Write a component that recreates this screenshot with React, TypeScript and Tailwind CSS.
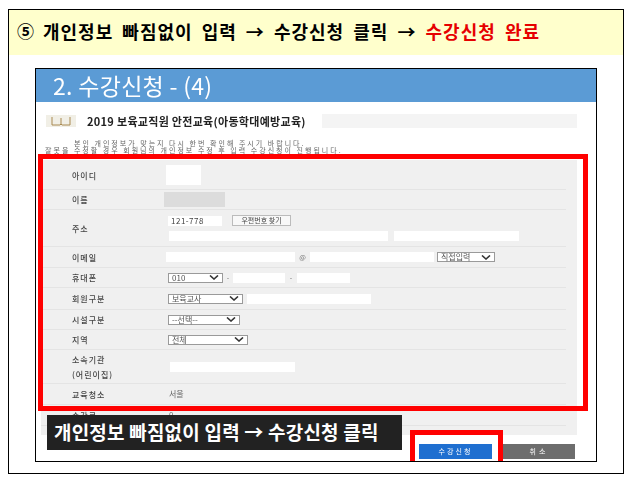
import React from 'react';

const KR = "font-['Noto_Sans_CJK_KR',sans-serif]";

function Chevron({ className }: { className?: string }) {
  return (
    <svg width="10" height="5" viewBox="0 0 10 5" className={className}>
      <path d="M1 0.5 L5 4 L9 0.5" fill="none" stroke="#333" strokeWidth="1.6" />
    </svg>
  );
}

function Select({ label, width }: { label: string; width: string }) {
  return (
    <div className={`${width} h-[10px] border border-[#9a9a9a] bg-white flex items-center justify-between pl-[3px] pr-[3px] text-[8px] leading-none text-[#555]`}>
      <span>{label}</span>
      <Chevron />
    </div>
  );
}

function Field({ width, gray }: { width: string; gray?: boolean }) {
  return <div className={`${width} h-[10px] ${gray ? 'bg-[#dcdcdc]' : 'bg-white'}`} />;
}

function Row({ label, height, children }: { label: React.ReactNode; height: string; children?: React.ReactNode }) {
  return (
    <div className={`${height} flex items-center border-b border-[#e4e4e4] mr-[11px]`}>
      <div className="w-[127px] pl-[31px] text-[8px] font-medium leading-[15px] tracking-[1px] text-[#444]">{label}</div>
      <div className="flex-1 min-w-0">{children}</div>
    </div>
  );
}

export default function App() {
  return (
    <div className={`${KR} w-[634px] h-[485px] bg-white pt-[9px] pl-[8px]`}>
      <div className="w-[616px] h-[465px] border border-black">
        <div className="h-[45px] bg-[#ffffcc] flex items-center pl-[8px] gap-[9px] pb-[4px]">
          <span className="text-[17px] font-bold leading-none text-black">⑤</span>
          <span className="text-[18px] font-bold leading-none tracking-[1px] [word-spacing:4px] whitespace-pre text-black">
            개인정보 빠짐없이 입력 → 수강신청 클릭 → <span className="text-[#e60000]">수강신청 완료</span>
          </span>
        </div>

        <div className="relative ml-[26px] mt-[13px] w-[562px] h-[394px] border border-black overflow-hidden">
          <div className="blur-[0.5px]">
            <div className="h-[33px] bg-[#5b9bd5] flex items-center pl-[17px] text-[23px] font-normal tracking-[0.3px] text-white">
              2. 수강신청 - (4)
            </div>

            <div className="flex items-center mt-[11px] pl-[10px] h-[16px]">
              <svg width="30" height="12" viewBox="0 0 30 12" className="mr-[11px]">
                <rect width="30" height="12" fill="#f1efe6" />
                <path d="M6 2 V10 H14 L15 9 L16 10 H24 V2 M15 3 V9" fill="none" stroke="#a98a52" strokeWidth="1" />
              </svg>
              <span className="text-[11px] font-bold tracking-[0.3px] text-[#222] whitespace-nowrap">2019 보육교직원 안전교육(아동학대예방교육)</span>
              <div className="ml-[16px] w-[255px] h-[14px] bg-[#f4f4f4]" />
            </div>

            <div className="mt-[11px] text-[7px] leading-[7px] tracking-[2px] text-[#666] whitespace-nowrap">
              <div className="pl-[38px]">본인 개인정보가 맞는지 다시 한번 확인해 주시기 바랍니다.</div>
              <div className="pl-[9px]">잘못을 수정할 경우 회원님의 개인정보 수정 후 입력 수강신청이 진행됩니다.</div>
            </div>

            <div className="ml-[5px] mt-[6px] w-[536px] bg-[#f0f0f0] pt-[1px] pb-[9px]">
              <Row label="아이디" height="h-[29px]">
                <div className="w-[35px] h-[20px] bg-white -ml-[2px]" />
              </Row>
              <Row label="이름" height="h-[20px]">
                <div className="w-[61px] h-[15px] bg-[#dcdcdc] -ml-[4px]" />
              </Row>
              <Row label="주소" height="h-[37px]">
                <div className="flex flex-col gap-[5px]">
                  <div className="flex items-center gap-[10px]">
                    <div className="w-[54px] h-[10px] bg-white text-[8px] leading-[10px] pl-[3px] tracking-[0.5px] text-[#444]">121-778</div>
                    <div className="h-[11px] w-[59px] border border-[#bbb] bg-[#f8f8f8] text-[7px] leading-[9px] text-center text-[#444] whitespace-nowrap">우편번호 찾기</div>
                  </div>
                  <div className="flex gap-[6px] ml-[1px]">
                    <Field width="w-[219px]" />
                    <Field width="w-[125px]" />
                  </div>
                </div>
              </Row>
              <Row label="이메일" height="h-[21px]">
                <div className="flex items-center -ml-[2px]">
                  <Field width="w-[129px]" />
                  <span className="w-[15px] text-center text-[7px] leading-none text-[#777]">@</span>
                  <Field width="w-[124px]" />
                  <div className="w-[3px]" />
                  <Select label="직접입력" width="w-[58px]" />
                </div>
              </Row>
              <Row label="휴대폰" height="h-[20px]">
                <div className="flex items-center">
                  <Select label="010" width="w-[55px]" />
                  <span className="w-[10px] text-center text-[7px] leading-none text-[#777]">-</span>
                  <Field width="w-[52px]" />
                  <span className="w-[12px] text-center text-[7px] leading-none text-[#777]">-</span>
                  <Field width="w-[53px]" />
                </div>
              </Row>
              <Row label="회원구분" height="h-[22px]">
                <div className="flex items-center gap-[4px]">
                  <Select label="보육교사" width="w-[75px]" />
                  <Field width="w-[124px]" />
                </div>
              </Row>
              <Row label="시설구분" height="h-[20px]">
                <Select label="--선택--" width="w-[72px]" />
              </Row>
              <Row label="지역" height="h-[20px]">
                <Select label="전체" width="w-[80px]" />
              </Row>
              <Row label={<>소속기관<br />(어린이집)</>} height="h-[34px]">
                <div className="ml-[2px]">
                  <Field width="w-[125px]" />
                </div>
              </Row>
              <Row label="교육청소" height="h-[21px]">
                <span className="text-[8px] leading-none text-[#666] block ml-[1px]">서울</span>
              </Row>
              <Row label="수강료" height="h-[21px]">
                <span className="text-[8px] leading-none text-[#666] block ml-[1px]">0</span>
              </Row>
            </div>

            <div className="flex gap-[11px] ml-[383px] mt-[9px]">
              <div className="w-[73px] h-[15px] bg-[#1f6fd0] text-white text-[7px] leading-[15px] tracking-[2px] text-center">수강신청</div>
              <div className="w-[72px] h-[15px] bg-[#6d6d6d] text-white text-[7px] leading-[15px] tracking-[3px] text-center">취소</div>
            </div>
          </div>

          <div className="absolute left-[2px] top-[85px] w-[550px] h-[257px] border-[5px] border-[#ff0000]" />
          <div className="absolute left-[374px] top-[361px] w-[93px] h-[40px] border-[5px] border-[#ff0000]" />
          <div className="absolute left-[11px] top-[346px] w-[355px] h-[35px] bg-[#222222] flex items-center pl-[7px] text-[19px] font-bold tracking-[0.2px] text-white whitespace-nowrap">
            개인정보 빠짐없이 입력 → 수강신청 클릭
          </div>
        </div>
      </div>
    </div>
  );
}
